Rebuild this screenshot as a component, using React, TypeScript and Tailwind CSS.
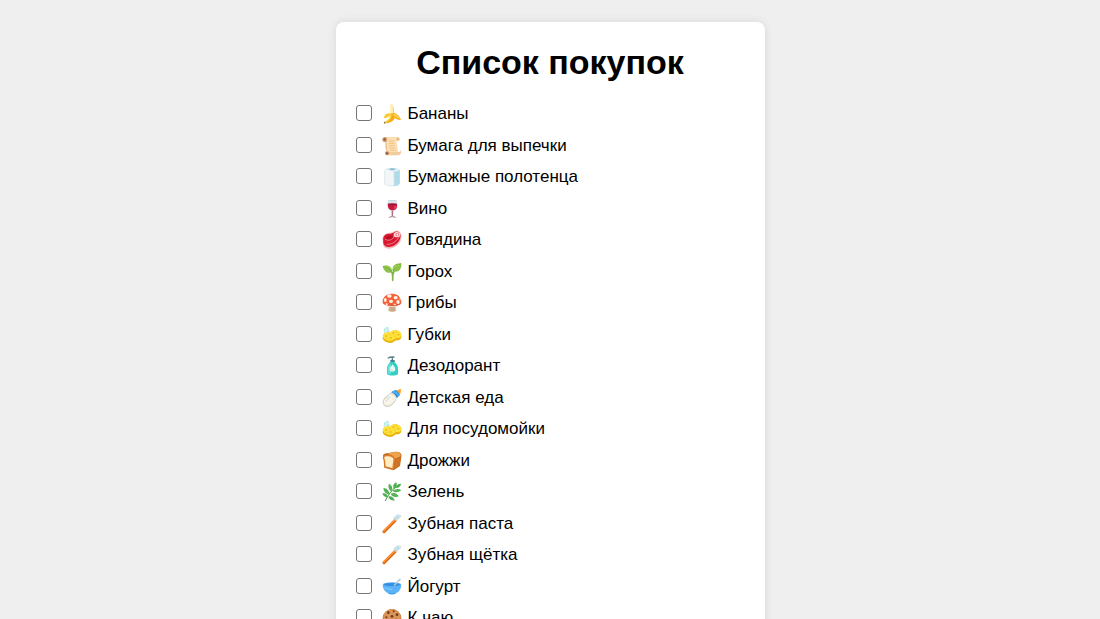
import React, { useState } from 'react';

interface ShoppingItem {
    id: string;
    name: string;
    icon: React.ReactNode;
}

const Sponge = () => (
    <>
        <g fill="#b5ebe4">
            <circle cx="9" cy="14" r="4" />
            <circle cx="16" cy="9" r="4" />
            <circle cx="18" cy="18" r="5" />
            <circle cx="8" cy="21" r="3" />
        </g>
        <path d="M3 32c2-8 10-11 18-9 5 1 7-6 16-7 10-1 20 5 21 13v8c-1 7-7 10-14 9-6-1-8 7-17 8C15 55 3 48 2 40z" fill="#e8b50c" />
        <path d="M3 32c2-8 10-11 18-9 5 1 7-6 16-7 10-1 20 5 21 13 0 8-7 11-14 10-6-1-8 7-17 8C15 48 2 41 3 32z" fill="#fee13a" />
        <g fill="#dfae10">
            <ellipse cx="12" cy="33" rx="3" ry="2" />
            <ellipse cx="26" cy="39" rx="3" ry="2" />
            <ellipse cx="34" cy="24" rx="3" ry="2" />
            <ellipse cx="49" cy="29" rx="3" ry="2" />
            <circle cx="22" cy="29" r="1.5" />
            <circle cx="43" cy="22" r="1.5" />
            <circle cx="39" cy="33" r="1.5" />
            <circle cx="15" cy="40" r="1.5" />
        </g>
    </>
);

const Toothbrush = () => (
    <>
        <path d="M6 53L39 20" stroke="#e06510" strokeWidth="9" strokeLinecap="round" />
        <path d="M5 51L38 18" stroke="#ff9434" strokeWidth="5" strokeLinecap="round" />
        <path d="M38 19L53 7" stroke="#f49a50" strokeWidth="7" strokeLinecap="round" />
        <path d="M33 12L46 1c7-2 12 2 10 8L42 20z" fill="#cce6f0" />
        <path d="M37 14l4 3m0-7l4 4m0-8l5 5" stroke="#92c4da" strokeWidth="2" />
    </>
);

const items: ShoppingItem[] = [
    {
        id: 'bananas',
        name: 'Бананы',
        icon: (
            <>
                <path d="M23 4c5-6 12-2 12 6l1 25-19 5C24 28 26 16 23 4z" fill="#fff0b8" />
                <path d="M31 6c3 9 2 19 0 29l5-1c0-12 2-23-5-28z" fill="#f2d37f" />
                <path d="M25 30c9-7 24-3 32 18-9 1-17-3-23-11z" fill="#f9a825" />
                <path d="M26 29c12-1 24 4 30 17-8-5-14-6-20-9z" fill="#ffd54f" />
                <path d="M25 30C16 24 7 32 5 42c8 0 13-2 17-7z" fill="#fdc92e" />
                <path d="M26 27c13 3 17 12 10 20-6 7-14 9-25 11l-3-5c12-4 18-13 18-26z" fill="#ffca28" />
                <path d="M28 30c3 12-3 20-18 27 14-1 26-8 27-16 0-5-3-9-9-11z" fill="#f5a623" />
                <path d="M8 53l3 5-3 1-3-4z" fill="#6b5735" />
            </>
        ),
    },
    {
        id: 'baking-paper',
        name: 'Бумага для выпечки',
        icon: (
            <>
                <path d="M6 4h40c8 0 9 8 4 10H14l4 36c-8-6-8-22-8-33z" fill="#e4b887" />
                <path d="M10 4h36c-5 4-2 11-1 19l4 28H18c-5-9-4-24-5-33z" fill="#ffdfaf" />
                <path d="M12 48h37c8 0 9-7 4-8 7 4 6 18-5 18H15z" fill="#f0cc9c" />
                <circle cx="8" cy="11" r="7" fill="#c28b61" />
                <circle cx="8" cy="10" r="3" fill="#8d5e44" />
                <circle cx="15" cy="52" r="6" fill="#c28b61" />
                <circle cx="15" cy="52" r="3" fill="#8d5e44" />
                <path d="M20 15h17M20 22h18M21 29h18M22 36h18M23 43h18" stroke="#dfb680" strokeWidth="2" />
            </>
        ),
    },
    {
        id: 'paper-towels',
        name: 'Бумажные полотенца',
        icon: (
            <>
                <path d="M9 8C17 1 45 2 53 9v41c-4 6-16 9-25 5V10z" fill="#9fd3e8" />
                <path d="M36 12l13-4 4 3v38c-3 5-9 8-17 8z" fill="#b6deec" />
                <path d="M10 9c7-8 35-6 42 0-7 6-34 8-42 0z" fill="#e6f1f5" />
                <ellipse cx="31" cy="7" rx="9" ry="3" fill="#8cb9cd" />
                <path d="M8 10c7 5 17 4 28 2v45c-11 1-21-1-28-5z" fill="#f2f6f7" />
                <path d="M36 13v44M8 10v42c7 4 17 6 28 5" stroke="#c4d9e1" strokeWidth="1.5" />
                <path d="M42 15v36m6-37v33" stroke="#7fbfd6" strokeWidth="2" strokeDasharray="2 4" />
            </>
        ),
    },
    {
        id: 'wine',
        name: 'Вино',
        icon: (
            <>
                <path d="M19 3h24c6 14 6 29-7 32l-2 16 8 3c4 4-25 4-21 0l7-3-2-16C12 31 15 15 19 3z" fill="#dce7eb" />
                <path d="M18 16h27c1 11-3 18-13 18-11 0-15-7-14-18z" fill="#c9183a" />
                <ellipse cx="31" cy="16" rx="14" ry="3" fill="#9c1434" />
                <path d="M41 20c1 5-2 9-5 10 1-4 2-7 2-10z" fill="#ef637e" />
                <path d="M31 35v16" stroke="#a8566a" strokeWidth="3" />
                <path d="M21 56c5-5 15-5 20 0" stroke="#b98a98" strokeWidth="3" />
                <path d="M20 5h23" stroke="#bed0d7" strokeWidth="2" />
            </>
        ),
    },
    {
        id: 'beef',
        name: 'Говядина',
        icon: (
            <>
                <path d="M3 37C-2 22 6 12 18 9 25 7 30 10 37 4 49-2 60 8 58 22 57 42 40 54 22 56 9 57 1 49 3 37z" fill="#f5bab6" />
                <path d="M4 31C2 18 11 12 20 11c9 0 12-2 19-6 14-3 19 7 16 18C51 39 35 50 20 51 8 51 2 43 4 31z" fill="#d8162f" />
                <path d="M10 25c4-9 15-9 24-7 2 10-12 17-24 7z" fill="#b80d28" />
                <path d="M9 27c9 8 26 2 27-10M14 43c14 1 28-7 36-20" stroke="#f5808b" strokeWidth="3" />
                <ellipse cx="45" cy="14" rx="10" ry="8" fill="#ffdce0" />
                <ellipse cx="46" cy="14" rx="6" ry="5" fill="#ed6674" />
                <circle cx="46" cy="14" r="3" fill="#fff" />
            </>
        ),
    },
    {
        id: 'peas',
        name: 'Горох',
        icon: (
            <>
                <path d="M16 23c13-1 17 9 16 32M50 17C37 19 33 28 32 45" stroke="#7cb342" strokeWidth="5" strokeLinecap="round" />
                <path d="M2 13c16-7 29 0 28 17C16 37 6 29 2 13z" fill="#8bc34a" />
                <path d="M58 4c2 18-9 30-26 24C29 11 40 3 58 4z" fill="#8bc34a" />
                <path d="M3 13c13 2 19 8 26 17M57 5C45 9 38 15 33 27" stroke="#6aa236" strokeWidth="2" />
                <path d="M8 12c9-1 15 3 18 9M35 21c3-7 10-10 17-11" stroke="#b1d94c" strokeWidth="3" />
            </>
        ),
    },
    {
        id: 'mushrooms',
        name: 'Грибы',
        icon: (
            <>
                <path d="M23 30h17l3 22c-3 6-21 6-25 0z" fill="#e2c8a7" />
                <path d="M24 40l-2 14c6 2 15 2 18-1l-2-13z" fill="#c9ac87" />
                <path d="M19 38h24" stroke="#f7e2c8" strokeWidth="7" strokeLinecap="round" />
                <path d="M2 29C0 13 14 1 30 2c17-1 29 12 28 28-3 11-52 10-56-1z" fill="#f4623a" />
                <path d="M3 31c9 6 45 6 55 0-3 10-50 10-55 0z" fill="#d9482b" />
                <g fill="#fff3e6">
                    <ellipse cx="22" cy="9" rx="7" ry="5" />
                    <ellipse cx="41" cy="14" rx="6" ry="5" />
                    <ellipse cx="27" cy="25" rx="6" ry="5" />
                    <ellipse cx="10" cy="21" rx="4" ry="6" />
                    <ellipse cx="48" cy="27" rx="5" ry="6" />
                    <circle cx="14" cy="34" r="3" />
                    <ellipse cx="38" cy="34" rx="4" ry="2" />
                    <circle cx="54" cy="18" r="2" />
                </g>
            </>
        ),
    },
    { id: 'sponges', name: 'Губки', icon: <Sponge /> },
    {
        id: 'deodorant',
        name: 'Дезодорант',
        icon: (
            <>
                <path d="M31 14V5M19 6c3-3 6-3 13-3h4" stroke="#5d8089" strokeWidth="4" strokeLinecap="round" />
                <path d="M25 12h13v7H25z" fill="#458391" />
                <path d="M24 18h15c2 5 9 9 9 19v16c0 7-33 7-33 0V37c0-10 7-14 9-19z" fill="#33cfc4" />
                <path d="M24 20c-1 7-7 9-7 18v13c3 3 6 3 10 3V28z" fill="#64e4d8" />
                <path d="M32 25c4 6 8 10 8 15 0 10-17 10-17 0 0-5 5-9 9-15z" fill="#e5fbf5" />
                <path d="M28 40c0 3 3 5 6 4" stroke="#91dcd7" strokeWidth="2" />
            </>
        ),
    },
    {
        id: 'baby-food',
        name: 'Детская еда',
        icon: (
            <>
                <path d="M38 10c7-1 8-6 20-8 0 8-2 14-6 22z" fill="#ffb74d" />
                <path d="M43 8c4 2 7 5 9 11l4-14z" fill="#f5a334" />
                <path d="M28 12L40 6c6 2 12 9 13 15l-8 9C37 27 31 20 28 12z" fill="#2584d8" />
                <path d="M30 12l8-4c7 2 12 7 14 13l-4 4c-5-7-10-11-18-13z" fill="#4fb0f5" />
                <path d="M28 13c8 2 14 8 16 17-4 14-14 24-25 27C8 58-1 48 3 36 8 26 20 21 28 13z" fill="#d3d3c8" />
                <path d="M26 17c7 1 13 7 16 13-5 12-13 21-24 23C8 54 3 45 6 37c4-7 12-12 20-20z" fill="#f8f4e8" />
                <path d="M20 27l4 3m-9 1l4 3m-8 2l4 3" stroke="#a9b5b9" strokeWidth="2" />
            </>
        ),
    },
    { id: 'dishwasher', name: 'Для посудомойки', icon: <Sponge /> },
    {
        id: 'yeast',
        name: 'Дрожжи',
        icon: (
            <>
                <path d="M4 18C0 9 11 6 20 6l20-4c13 0 21 6 18 16l-4 27-19 13-28-8z" fill="#c46a20" />
                <path d="M12 9L39 3c11 0 19 6 17 13l-17 7C34 12 24 10 12 9z" fill="#f0a34d" />
                <path d="M6 28C-1 20 2 12 14 12c16 0 28 5 25 16l-3 29-28-8z" fill="#db7f2c" />
                <path d="M9 26c-5-6-2-10 7-10 12 0 21 5 18 12l-3 23-20-5z" fill="#ffedc5" />
                <path d="M41 26l14-6-3 24-15 10z" fill="#cf7426" />
            </>
        ),
    },
    {
        id: 'greens',
        name: 'Зелень',
        icon: (
            <>
                <path d="M10 56C18 36 33 21 50 8" stroke="#43a047" strokeWidth="3" strokeLinecap="round" />
                <g fill="#4caf50">
                    <path d="M36 22c-5-9-2-17 7-21 3 9 1 16-7 21z" />
                    <path d="M39 18c4-10 10-13 19-13-3 9-9 14-19 13z" />
                    <path d="M29 29C19 22 17 14 21 5c10 6 12 14 8 24z" />
                    <path d="M32 27c8-7 18-8 26-2-8 7-18 8-26 2z" />
                    <path d="M22 38C11 36 5 29 4 18c12 1 18 8 18 20z" />
                    <path d="M26 35c10-5 20-1 24 8-10 4-20 1-24-8z" />
                    <path d="M17 46C9 46 3 42 1 34c11-2 16 4 16 12z" />
                    <path d="M19 43c10-2 17 4 19 13-11 0-18-4-19-13z" />
                </g>
                <path d="M24 13l5 14M8 24l13 13M34 27l18-3M28 36l15 4" stroke="#85c766" strokeWidth="1.5" />
            </>
        ),
    },
    { id: 'toothpaste', name: 'Зубная паста', icon: <Toothbrush /> },
    { id: 'toothbrush', name: 'Зубная щётка', icon: <Toothbrush /> },
    {
        id: 'yogurt',
        name: 'Йогурт',
        icon: (
            <>
                <ellipse cx="30" cy="23" rx="28" ry="7" fill="#5aaef5" />
                <ellipse cx="30" cy="23" rx="24" ry="5" fill="#2f8fe0" />
                <path d="M34 25L48 10c2-6 10-6 8-1-1 4-4 5-6 4L39 26z" fill="#b9c9d0" />
                <path d="M2 23c11 6 45 6 56 0 0 12-6 20-15 25-2 5-24 5-26 0C8 43 2 35 2 23z" fill="#5ab2fa" />
                <path d="M9 33c6 3 12 4 20 4" stroke="#83c8ff" strokeWidth="4" strokeLinecap="round" />
                <path d="M18 48c6 2 18 2 24 0-1 5-23 5-24 0z" fill="#3a98e6" />
            </>
        ),
    },
    {
        id: 'tea-snacks',
        name: 'К чаю',
        icon: (
            <>
                <circle cx="30" cy="31" r="28" fill="#c0733a" />
                <circle cx="30" cy="29" r="26" fill="#db9455" />
                <g fill="#6b3b26">
                    <circle cx="19" cy="14" r="4" />
                    <circle cx="35" cy="10" r="3" />
                    <circle cx="45" cy="20" r="4" />
                    <circle cx="30" cy="25" r="4" />
                    <circle cx="13" cy="28" r="3" />
                    <circle cx="20" cy="39" r="4" />
                    <circle cx="43" cy="36" r="4" />
                    <circle cx="33" cy="48" r="3" />
                </g>
            </>
        ),
    },
];

const App: React.FC = () => {
    const [checked, setChecked] = useState<string[]>([]);

    const toggleItem = (id: string) => {
        setChecked(prev => (prev.includes(id) ? prev.filter(i => i !== id) : [...prev, id]));
    };

    return (
        <div className="min-h-screen bg-[#efefef] px-4 pt-[22px] font-['Liberation_Sans',Arial,sans-serif] text-black">
            <main className="mx-auto w-full max-w-[429px] rounded-lg bg-white px-5 pt-5 pb-5 shadow-[0_0_10px_rgba(0,0,0,0.1)]">
                <h1 className="mb-4 text-center text-[34px] leading-[40px] font-bold">Список покупок</h1>
                <ul>
                    {items.map(item => (
                        <li key={item.id} className="flex items-center odd:h-8 even:h-[31px]">
                            <input
                                id={item.id}
                                type="checkbox"
                                checked={checked.includes(item.id)}
                                onChange={() => toggleItem(item.id)}
                                className="mr-[10px] mb-0.5 size-4 shrink-0 appearance-none rounded-[3px] border border-[#767676] bg-white checked:bg-[#0075ff]"
                            />
                            <label htmlFor={item.id} className="flex items-center gap-[6px] text-[17px] leading-5">
                                <svg viewBox="0 0 60 60" fill="none" className="size-5 shrink-0" aria-hidden="true">
                                    {item.icon}
                                </svg>
                                {item.name}
                            </label>
                        </li>
                    ))}
                </ul>
            </main>
        </div>
    );
};

export default App;
